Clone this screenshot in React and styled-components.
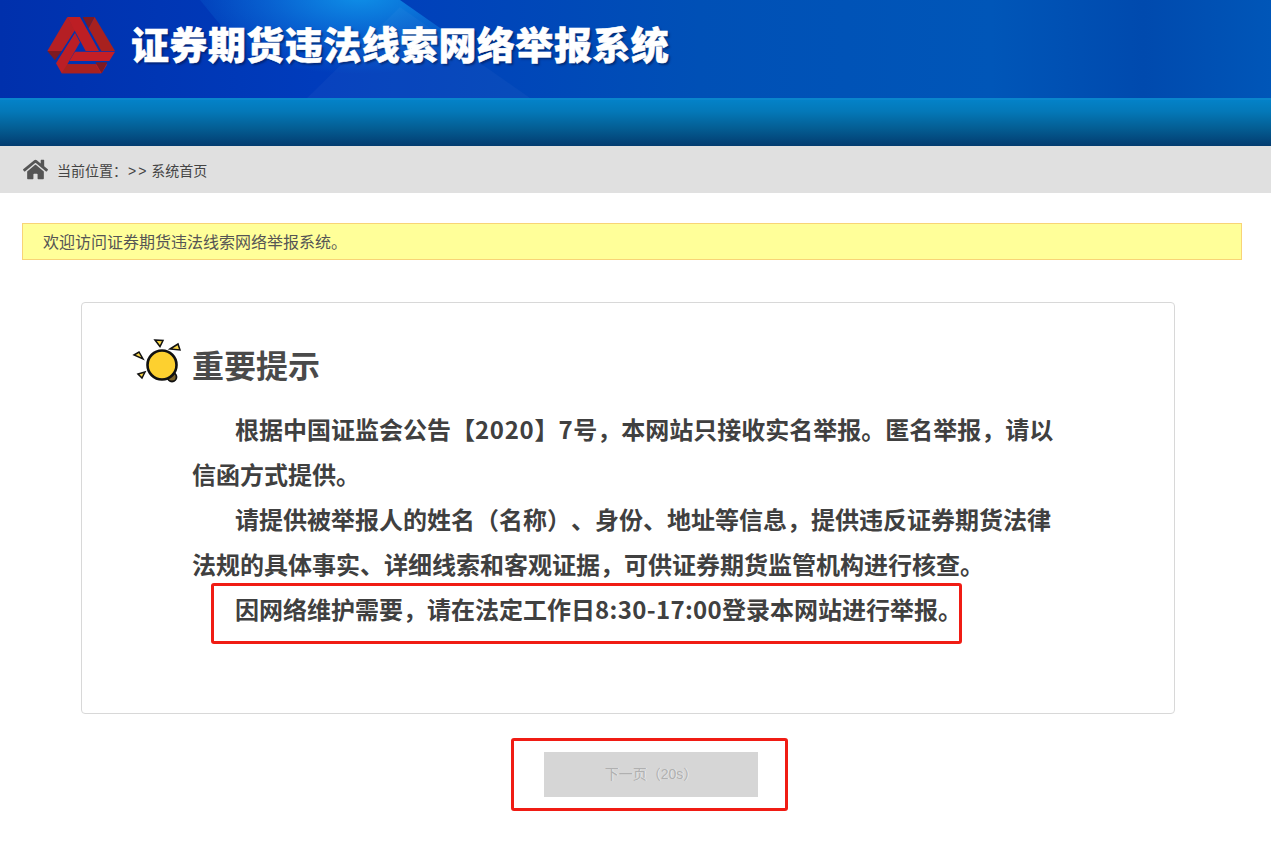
import React from 'react'
import styled, { createGlobalStyle } from 'styled-components'
import { FaHome } from 'react-icons/fa'

const GlobalStyle = createGlobalStyle`
  html, body { margin: 0; padding: 0; background: #fff; }
  body {
    font-family: "Noto Sans CJK SC", "Liberation Sans", sans-serif;
    color: #444;
    text-spacing-trim: space-all;
  }
`

const Logo = () => (
  <LogoSvg viewBox="0 0 300 240">
    <polygon points="52,138 112,36 136,74 95,138" fill="#b51f24" />
    <polygon points="52,138 95,138 75,166" fill="#7d1a22" />
    <polygon points="112,36 150,36 207,138 167,138" fill="#bd1e24" />
    <polygon points="158,36 194,36 176,70" fill="#7d1a22" />
    <polygon points="194,36 255,138 214,138 176,70" fill="#a8211f" />
    <polygon points="135,140 255,140 238,168 118,168" fill="#c41f26" />
    <polygon points="135,84 150,112 112,178 196,178 232,178 215,205 95,205 78,175" fill="#bb1e26" />
    <polygon points="196,172 232,172 215,205" fill="#7d1a22" />
    <polygon points="95,205 112,178 196,178 212,205" fill="#a8211f" />
  </LogoSvg>
)

const Bulb = () => (
  <svg width="50" height="50" viewBox="0 0 50 50">
    <circle cx="40" cy="38" r="4.5" fill="#7a6128" stroke="#111" strokeWidth="1.8" />
    <circle cx="30" cy="26" r="14.5" fill="#fdd02f" stroke="#111" strokeWidth="2.6" />
    <polygon points="23,1 31,1.5 28,7.5" fill="#f7d54a" stroke="#111" strokeWidth="1.5" />
    <polygon points="38,10 46,5 48,11" fill="#f7d54a" stroke="#111" strokeWidth="1.5" />
    <polygon points="2,16 7,13 11,20" fill="#f7d54a" stroke="#111" strokeWidth="1.5" />
    <polygon points="6,35 13,33 10,39" fill="#f7d54a" stroke="#111" strokeWidth="1.5" />
  </svg>
)

const App = () => {
  return (
    <Page>
      <GlobalStyle />
      <Banner>
        <Logo />
        <SiteTitle>证券期货违法线索网络举报系统</SiteTitle>
      </Banner>
      <NavBar />
      <Crumb>
        <FaHome size={25} color="#555" />
        <CrumbText>当前位置：<Arrows>&gt;&gt;</Arrows>系统首页</CrumbText>
      </Crumb>
      <Notice>欢迎访问证券期货违法线索网络举报系统。</Notice>
      <Card>
        <CardHead>
          <Bulb />
          <CardTitle>重要提示</CardTitle>
        </CardHead>
        <Para>
          根据中国证监会公告【<Digits $space={0.7}>2020</Digits>】<Digits $space={0.7}>7</Digits>号，本网站只接收实名举报。匿名举报，请以
          <br />
          信函方式提供。
        </Para>
        <Para>请提供被举报人的姓名（名称）、身份、地址等信息，提供违反证券期货法律法规的具体事实、详细线索和客观证据，可供证券期货监管机构进行核查。</Para>
        <Para>
          因网络维护需要，请在法定工作日<Digits $space={0.35}>8:30-17:00</Digits>登录本网站进行举报。
          <Highlight />
        </Para>
      </Card>
      <ButtonBox>
        <NextButton disabled>下一页（20s）</NextButton>
      </ButtonBox>
    </Page>
  )
}

export default App

const Page = styled.div`
  width: 1271px;
  height: 853px;
  overflow: hidden;
`

const Banner = styled.div`
  position: relative;
  height: 98px;
  display: flex;
  align-items: flex-start;
  padding-left: 47px;
  border-bottom: 2px solid #0a86cc;
  background: linear-gradient(90deg, #0030ac 0, #003cbc 25%, #0050b6 55%, #0056b8 78%, #004aae 90%, #0056b8 100%);

  /* light rays behind the title */
  &::before {
    content: "";
    position: absolute;
    inset: 0;
    clip-path: polygon(200px 0, 400px 0, 540px 98px, 280px 98px);
    background: radial-gradient(ellipse 185px 78px at 360px -4px, rgba(16, 150, 235, 0.92) 0, rgba(16, 135, 230, 0.5) 50%, rgba(16, 120, 220, 0) 100%) no-repeat;
  }

  &::after {
    content: "";
    position: absolute;
    inset: 0;
    clip-path: polygon(307px 98px, 400px 7px, 530px 98px);
    background: rgba(255, 255, 255, 0.03);
  }
`

const LogoSvg = styled.svg`
  position: relative;
  z-index: 1;
  width: 100px;
  height: 80px;
  margin: 5px 0 0 -17px;
  flex: none;
`

const SiteTitle = styled.h1`
  position: relative;
  z-index: 1;
  margin: 19px 0 0 1px;
  font-size: 38px;
  line-height: 48px;
  font-weight: 900;
  letter-spacing: 0.45px;
  white-space: nowrap;
  color: #fff;
  -webkit-text-stroke: 0.5px #fff;
  text-shadow: 2px 2px 2px rgba(0, 20, 70, 0.55);
`

const NavBar = styled.div`
  height: 46px;
  background: linear-gradient(180deg, #0482c8 0, #0478b8 25%, #045f95 60%, #033c70 100%);
`

const Crumb = styled.div`
  height: 47px;
  display: flex;
  align-items: center;
  padding-left: 23px;
  background: #e0e0e0;
`

const CrumbText = styled.span`
  margin: 2px 0 0 9px;
  font-family: "Liberation Sans", "Noto Sans CJK SC", sans-serif;
  font-size: 14px;
  line-height: 20px;
  color: #444;
`

const Arrows = styled.span`
  margin: 0 3px 0 1px;
  letter-spacing: 2px;
`

const Notice = styled.div`
  box-sizing: border-box;
  width: 1220px;
  height: 37px;
  margin: 30px 0 0 22px;
  padding-left: 20px;
  border: 1px solid #f8d477;
  background: #ffff99;
  font-size: 16px;
  line-height: 35px;
  color: #555;
`

const Card = styled.div`
  box-sizing: border-box;
  width: 1094px;
  height: 412px;
  margin: 42px 0 0 81px;
  padding: 37px 120px 0 110px;
  border: 1px solid #d8d8d8;
  border-radius: 4px;
`

const CardHead = styled.div`
  display: flex;
  align-items: center;
  height: 48px;
  margin: 0 0 18px -60px;
  gap: 10px;
`

const CardTitle = styled.h2`
  margin: 0;
  font-size: 32px;
  line-height: 48px;
  font-weight: 700;
  color: #4a4a4a;
`

const Para = styled.p`
  position: relative;
  margin: 0;
  font-size: 24px;
  line-height: 45px;
  font-weight: 700;
  color: #404040;
  text-indent: 43px;
`

const Digits = styled.span`
  letter-spacing: ${props => props.$space}px;
`

const Highlight = styled.span`
  position: absolute;
  left: 19px;
  top: -3px;
  width: 745px;
  height: 55px;
  border: 3px solid #f01c14;
  border-radius: 3px;
`

const ButtonBox = styled.div`
  box-sizing: border-box;
  width: 277px;
  height: 73px;
  margin: 24px 0 0 511px;
  display: flex;
  align-items: center;
  border: 3px solid #f01c14;
  border-radius: 3px;
`

const NextButton = styled.button`
  width: 214px;
  height: 45px;
  margin-left: 30px;
  padding: 0 0 3px;
  border: none;
  background: #d6d6d6;
  font-family: "Liberation Sans", "Noto Sans CJK SC", sans-serif;
  font-size: 14px;
  color: #b0b0b0;
  text-shadow: 1px 0 0 rgba(255, 255, 255, 0.5);
`
